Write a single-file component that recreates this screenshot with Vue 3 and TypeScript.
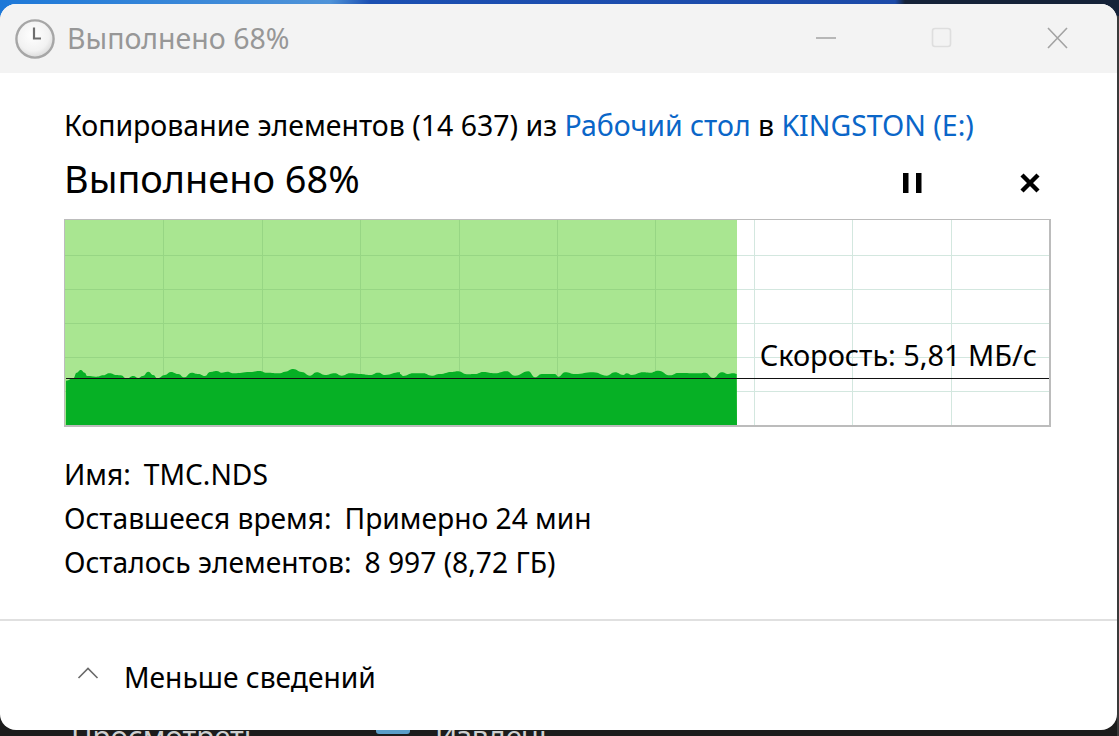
<script setup lang="ts">
import { computed } from 'vue'

const W = 985
const H = 206
const progressEnd = 672

// [screen x, screen y] samples of the throughput curve
const left: [number, number][] = [[48,92],[70,85],[80,68],[92,60],[104,68],[112,78],[140,80],[160,76],[178,70],[200,75],[212,76],[230,86],[250,78],[265,84],[278,78],[295,65],[310,75],[322,85],[345,75],[362,66],[385,72],[402,82],[425,68],[445,72],[465,78],[480,66],[500,63],[515,68],[532,65],[550,70],[600,66],[628,63],[650,68],[690,70],[705,65],[730,57],[755,66],[780,77],[800,67],[825,75],[855,70],[875,77],[900,70],[930,72],[960,75],[985,68],[1005,75],[1050,67]]
const right: [number, number][] = [[0,72],[10,78],[40,70],[70,70],[95,77],[120,72],[155,66],[175,64],[200,73],[225,72],[250,66],[285,70],[320,64],[345,77],[385,64],[405,82],[425,72],[465,72],[475,80],[495,67],[525,72],[580,67],[620,77],[645,67],[670,75],[680,70],[695,75],[730,67],[750,68],[775,62],[810,76],[835,69],[900,70],[915,68],[940,84],[965,67],[985,72],[1000,70],[1010,72]]

const OX = 65
const OY = 220

const points = computed(() => [
  ...left.map(([x, y]) => [50 + x / 3 - OX, 350 + y / 3 - OY]),
  ...right.map(([x, y]) => [400 + x / 3 - OX, 350 + y / 3 - OY]),
])

const areaPath = computed(() => {
  const pts = points.value
  let d = `M1 ${H} L${pts[0][0].toFixed(1)} ${pts[0][1].toFixed(1)}`
  for (let i = 1; i < pts.length; i++) {
    const [px, py] = pts[i - 1]
    const [x, y] = pts[i]
    const mx = (px + x) / 2
    d += ` C${mx.toFixed(1)} ${py.toFixed(1)} ${mx.toFixed(1)} ${y.toFixed(1)} ${x.toFixed(1)} ${y.toFixed(1)}`
  }
  return `${d} L${progressEnd} ${H} Z`
})

const vLines = [98, 197, 295, 394, 492, 590, 689, 787, 886]
const hLines = [35, 69, 103, 137, 171]

const rows = [
  { label: 'Имя:', value: 'TMC.NDS' },
  { label: 'Оставшееся время:', value: 'Примерно 24 мин' },
  { label: 'Осталось элементов:', value: '8 997 (8,72 ГБ)' },
]
</script>

<template>
  <div class="screen">
    <div class="behind">
      <span class="behind-a">Просмотреть</span>
      <span class="behind-icon"></span>
      <span class="behind-b">Извлечь</span>
    </div>
    <div class="window">
      <header class="titlebar">
        <svg class="clock" width="42" height="42" viewBox="0 0 42 42">
          <defs>
            <radialGradient id="face" cx="45%" cy="40%" r="65%">
              <stop offset="0%" stop-color="#ffffff" />
              <stop offset="65%" stop-color="#f2f2f2" />
              <stop offset="100%" stop-color="#d4d4d4" />
            </radialGradient>
          </defs>
          <circle cx="21" cy="21" r="18.6" fill="url(#face)" stroke="#a6a6a6" stroke-width="2.4" />
          <path d="M20 9.5V20.5H27" fill="none" stroke="#6e6e6e" stroke-width="2.2" />
        </svg>
        <span class="title-text">Выполнено 68%</span>
        <div class="controls">
          <svg class="ctl-min" width="22" height="4" viewBox="0 0 22 4"><path d="M1 2H21" stroke="#a3a3a3" stroke-width="1.6" /></svg>
          <svg class="ctl-max" width="22" height="22" viewBox="0 0 22 22"><rect x="1.5" y="1.5" width="18" height="18" rx="2.5" fill="none" stroke="#dedede" stroke-width="1.6" /></svg>
          <svg class="ctl-close" width="22" height="22" viewBox="0 0 22 22"><path d="M2 1L21 21M21 1L2 21" stroke="#a3a3a3" stroke-width="1.6" /></svg>
        </div>
      </header>

      <main class="body">
        <p class="summary">
          Копирование элементов (14 637) из <a class="link">Рабочий стол</a> в <a class="link">KINGSTON (E:)</a>
        </p>
        <div class="heading-row">
          <h1 class="heading">Выполнено 68%</h1>
          <div class="actions">
            <svg width="20" height="20" viewBox="0 0 20 20"><path d="M0 0H5.5V20H0ZM13 0H18.5V20H13Z" fill="#000" /></svg>
            <svg width="20" height="20" viewBox="0 0 20 20"><path d="M2 2L18 18M18 2L2 18" stroke="#000" stroke-width="4.4" /></svg>
          </div>
        </div>

        <div class="graph">
          <svg class="plot" :width="W" :height="H" :viewBox="`0 0 ${W} ${H}`">
            <rect x="0" y="0" :width="progressEnd" :height="H" fill="#a9e691" />
            <g stroke-width="1">
              <template v-for="x in vLines" :key="x">
                <line :x1="x + 0.5" :x2="x + 0.5" y1="0" :y2="H" :stroke="x < progressEnd ? '#97d684' : '#d3e7df'" />
              </template>
              <template v-for="y in hLines" :key="y">
                <line x1="0" :x2="progressEnd" :y1="y + 0.5" :y2="y + 0.5" stroke="#97d684" />
                <line :x1="progressEnd" :x2="W" :y1="y + 0.5" :y2="y + 0.5" stroke="#d3e7df" />
              </template>
            </g>
            <path :d="areaPath" fill="#06b025" />
            <line x1="1" :x2="W" y1="158.5" y2="158.5" stroke="#111" stroke-width="1.2" />
          </svg>
          <span class="speed">Скорость: 5,81 МБ/с</span>
        </div>

        <dl class="details">
          <div v-for="row in rows" :key="row.label" class="detail">
            <dt>{{ row.label }}</dt>
            <dd>{{ row.value }}</dd>
          </div>
        </dl>
      </main>

      <footer class="footer">
        <svg class="chevron" width="22" height="12" viewBox="0 0 22 12"><path d="M1.5 11L11 1.5L20.5 11" fill="none" stroke="#6a6a6a" stroke-width="1.6" /></svg>
        <span class="footer-text">Меньше сведений</span>
      </footer>
    </div>
  </div>
</template>

<style scoped>
.screen {
  position: relative;
  width: 1119px;
  height: 736px;
  box-sizing: border-box;
  padding: 4px 2px 6px 0;
  overflow: hidden;
  font-family: "Noto Sans", "Open Sans", sans-serif;
  color: #000;
  background:
    linear-gradient(90deg, #1d78d8 0, #4f93d8 330px, #1b4fb2 370px, #1c4aa8 895px, #152238 905px, #152238 100%) top / 100% 16px no-repeat,
    linear-gradient(90deg, #3a3a3a, #3a3a3a) right top / 2px 100% no-repeat,
    #1c1c1c;
}
.behind {
  position: absolute;
  left: 0;
  right: 0;
  top: 718px;
  color: #cfcfcf;
  font-size: 29.5px;
  line-height: 36px;
}
.behind-a { position: absolute; left: 71px; top: 0; }
.behind-b { position: absolute; left: 435px; top: 0; }
.behind-icon {
  position: absolute;
  left: 376px;
  top: 11px;
  width: 34px;
  height: 5px;
  border-radius: 0 0 3px 3px;
  background: #5a9ec9;
}
.window {
  position: relative;
  height: 100%;
  display: flex;
  flex-direction: column;
  background: #fff;
  border-radius: 16px;
  overflow: hidden;
}
.titlebar {
  flex: 0 0 69px;
  display: flex;
  align-items: center;
  background: #f3f3f3;
  padding-left: 14px;
}
.clock { flex: none; }
.title-text {
  margin: -2px 0 0 11px;
  font-size: 28.5px;
  color: #979797;
}
.controls {
  margin-left: auto;
  display: flex;
  align-items: center;
  width: 253px;
  padding: 0 49px 2px 0;
  justify-content: space-between;
  box-sizing: content-box;
}
.ctl-min, .ctl-max, .ctl-close { flex: none; }
.body {
  flex: 1;
  padding: 0 67px 0 64px;
  display: flex;
  flex-direction: column;
}
.summary {
  margin: 33px 0 0;
  font-size: 28.47px;
  line-height: 38px;
  white-space: nowrap;
}
.link {
  color: #0a66c8;
}
.heading-row {
  display: flex;
  align-items: center;
  justify-content: space-between;
  height: 54px;
  margin-top: 8px;
}
.heading {
  margin: -2px 0 0;
  font-size: 37.9px;
  font-weight: 400;
  line-height: 48px;
}
.actions {
  display: flex;
  gap: 97px;
  margin-right: 10px;
  margin-top: 7px;
}
.graph {
  position: relative;
  margin-top: 13px;
  width: 984px;
  height: 205px;
  border: 1px solid #bcbcbc;
  border-width: 1px 2px 2px 1px;
  overflow: hidden;
}
.plot { display: block; }
.speed {
  position: absolute;
  right: 12px;
  top: 117px;
  font-size: 28.9px;
  line-height: 36px;
  white-space: nowrap;
}
.details {
  margin: 25px 0 0;
  font-size: 28.2px;
  line-height: 44px;
}
.detail {
  display: flex;
  gap: 13px;
}
.detail dt, .detail dd { margin: 0; white-space: nowrap; }
.footer {
  flex: 0 0 111px;
  box-sizing: border-box;
  border-top: 2px solid #e0e0e0;
  display: flex;
  align-items: center;
  padding-left: 77px;
}
.chevron { flex: none; margin-top: -6px; }
.footer-text {
  margin: 2px 0 0 25px;
  font-size: 28.2px;
}
</style>

<style>
html, body { background: #1c1c1c; }
</style>
